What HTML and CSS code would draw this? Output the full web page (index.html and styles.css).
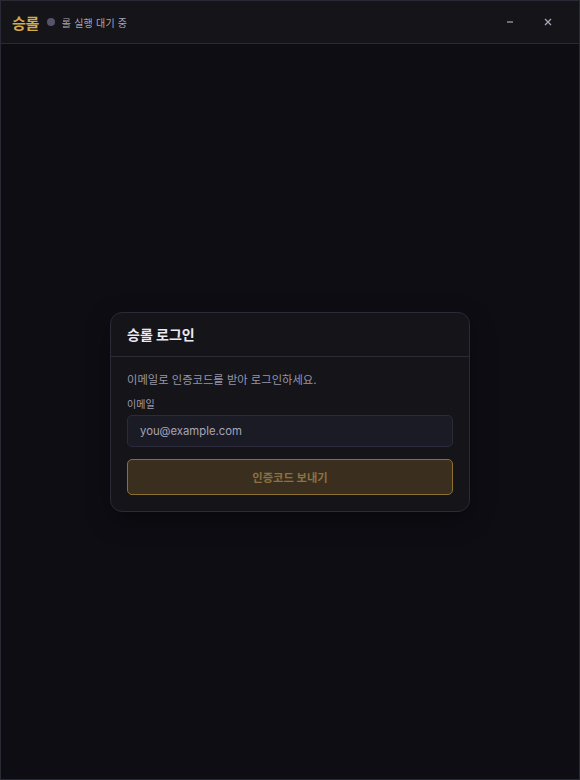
FILE: index.html
```html
<!DOCTYPE html>
<html lang="ko">
<head>
<meta charset="utf-8">
<link rel="stylesheet" href="styles.css">
</head>
<body>
<div class="window">
  <header class="titlebar">
    <div class="brand">
      <span class="logo">승롤</span>
      <span class="dot"></span>
      <span class="status">롤 실행 대기 중</span>
    </div>
    <div class="controls">
      <button class="ctl" aria-label="minimize">
        <svg width="10" height="10" viewBox="0 0 10 10"><path d="M2 5h6" stroke="currentColor" stroke-width="1.2"/></svg>
      </button>
      <button class="ctl" aria-label="close">
        <svg width="10" height="10" viewBox="0 0 10 10"><path d="M2 2l6 6M8 2l-6 6" stroke="currentColor" stroke-width="1.3"/></svg>
      </button>
    </div>
  </header>
  <main class="content">
    <section class="card">
      <div class="card-head">승롤 로그인</div>
      <div class="card-body">
        <p class="desc">이메일로 인증코드를 받아 로그인하세요.</p>
        <label class="label" for="email">이메일</label>
        <input id="email" class="input" type="email" placeholder="you@example.com">
        <button class="submit">인증코드 보내기</button>
      </div>
    </section>
  </main>
</div>
</body>
</html>
```
FILE: styles.css
```css
* { box-sizing: border-box; }
html, body { margin: 0; height: 100%; }
body {
  background: #0e0d13;
  font-family: Inter, "Noto Sans CJK KR", "Noto Sans", sans-serif;
  color: #e8e6ef;
}
.window {
  height: 780px;
  border: 1px solid #2a2a34;
  display: flex;
  flex-direction: column;
  background: #0e0d13;
}
.titlebar {
  height: 43px;
  flex: none;
  background: #141419;
  border-bottom: 1px solid #2a2a36;
  display: flex;
  align-items: center;
  justify-content: space-between;
  padding: 0 0 0 11px;
}
.brand { display: flex; align-items: center; }
.logo {
  font-size: 15px;
  font-weight: 700;
  color: #d4ac4c;
  letter-spacing: -0.4px;
}
.dot {
  width: 8px; height: 8px; border-radius: 50%;
  background: #56536a;
  margin-left: 8px;
}
.status {
  font-size: 10px;
  color: #a9a7b7;
  margin-left: 7px;
  letter-spacing: 0.2px;
}
.controls { display: flex; height: 100%; }
.ctl {
  width: 38px;
  height: 100%;
  background: transparent;
  border: 0;
  color: #a9a7b7;
  display: flex;
  align-items: center;
  justify-content: center;
  padding: 0;
}
.ctl:last-child { margin-right: 12px; }
.content {
  flex: 1;
  display: flex;
  align-items: center;
  justify-content: center;
}
.card {
  width: 360px;
  background: #141419;
  border: 1px solid #2a2a38;
  border-radius: 12px;
  box-shadow: 0 8px 24px rgba(0,0,0,0.35);
}
.card-head {
  padding: 12px 16px 11px;
  font-size: 14px;
  font-weight: 700;
  color: #eeeaf2;
  border-bottom: 1px solid #2a2a38;
  line-height: 20px;
}
.card-body {
  padding: 14px 16px 16px;
  display: flex;
  flex-direction: column;
}
.desc {
  margin: 0;
  font-size: 11.3px;
  color: #9896a8;
  line-height: 18px;
}
.label {
  margin-top: 8px;
  font-size: 10px;
  color: #9f9db0;
  line-height: 14px;
}
.input {
  margin-top: 4px;
  height: 32px;
  background: #1b1b26;
  border: 1px solid #2b2b3b;
  border-radius: 5px;
  padding: 0 12px;
  font: inherit;
  font-size: 11.3px;
  color: #e8e6ef;
  outline: none;
}
.input::placeholder { color: #a7a5b5; }
.submit {
  margin-top: 12px;
  height: 36px;
  background: #3a2f1e;
  border: 1px solid #8c7032;
  border-radius: 5px;
  font: inherit;
  font-size: 11.3px;
  font-weight: 700;
  color: #8c7141;
}
```
